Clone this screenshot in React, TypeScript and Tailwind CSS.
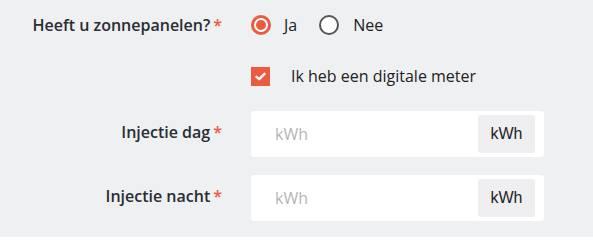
import { useState } from "react";

const Req = () => <span className="ml-[3px] text-[#ec5a3f]">*</span>;

function UnitInput() {
  return (
    <div className="flex h-[46px] w-[293px] items-center rounded-[3px] bg-white pl-6 pr-[9px]">
      <input
        placeholder="kWh"
        className="min-w-0 flex-1 bg-transparent text-[16px] text-[#333] outline-none placeholder:text-[#b5b5b5]"
      />
      <span className="flex h-[38px] w-[57px] items-center justify-center rounded-[3px] bg-[#efeff1] font-['Liberation_Sans',sans-serif] text-[16px] text-[#222]">
        kWh
      </span>
    </div>
  );
}

export default function App() {
  const [solar, setSolar] = useState<"ja" | "nee">("ja");
  const [digital, setDigital] = useState(true);

  return (
    <div className="h-[237px] w-[593px] bg-[#eff0f2] pt-[13px] font-['Open_Sans',sans-serif] text-[16px] text-[#222]">
      <div className="grid grid-cols-[222px_1fr] gap-x-[29px]">
        {/* Zonnepanelen */}
        <div className="flex h-6 items-center justify-end font-semibold text-[#2a2d33]">
          Heeft u zonnepanelen?<Req />
        </div>
        <div className="flex h-6 items-center">
          <button onClick={() => setSolar("ja")} className="flex items-center">
            <span
              className={`flex h-5 w-5 items-center justify-center rounded-full ${
                solar === "ja" ? "border-[3px] border-[#ec5a3f]" : "border-2 border-[#555]"
              } bg-white`}
            >
              {solar === "ja" && <span className="h-[10px] w-[10px] rounded-full bg-[#ec5a3f]" />}
            </span>
            <span className="ml-[13px]">Ja</span>
          </button>
          <button onClick={() => setSolar("nee")} className="ml-[22px] flex items-center">
            <span
              className={`flex h-5 w-5 items-center justify-center rounded-full ${
                solar === "nee" ? "border-[3px] border-[#ec5a3f]" : "border-2 border-[#555]"
              } bg-white`}
            >
              {solar === "nee" && <span className="h-[10px] w-[10px] rounded-full bg-[#ec5a3f]" />}
            </span>
            <span className="ml-[14px]">Nee</span>
          </button>
        </div>

        {/* Digitale meter */}
        <div />
        <div className="mt-[27px] flex h-6 items-center">
          <button onClick={() => setDigital(!digital)} className="flex items-center">
            <span
              className={`flex h-[19px] w-[19px] items-center justify-center ${
                digital ? "bg-[#ec5a3f]" : "border-2 border-[#555] bg-white"
              }`}
            >
              {digital && (
                <svg width="11" height="9" viewBox="0 0 11 9">
                  <path d="M1.5 4.8 L4.2 7.2 L9.5 1.8" fill="none" stroke="white" strokeWidth="2.4" strokeLinecap="round" strokeLinejoin="round" />
                </svg>
              )}
            </span>
            <span className="ml-[21px]">Ik heb een digitale meter</span>
          </button>
        </div>

        {/* Injectie dag */}
        <div className="mt-[23px] flex justify-end pt-[9px] font-semibold text-[#2a2d33]">
          Injectie dag<Req />
        </div>
        <div className="mt-[23px]">
          <UnitInput />
        </div>

        {/* Injectie nacht */}
        <div className="mt-[18px] flex justify-end pt-[9px] font-semibold text-[#2a2d33]">
          Injectie nacht<Req />
        </div>
        <div className="mt-[18px]">
          <UnitInput />
        </div>
      </div>
    </div>
  );
}
